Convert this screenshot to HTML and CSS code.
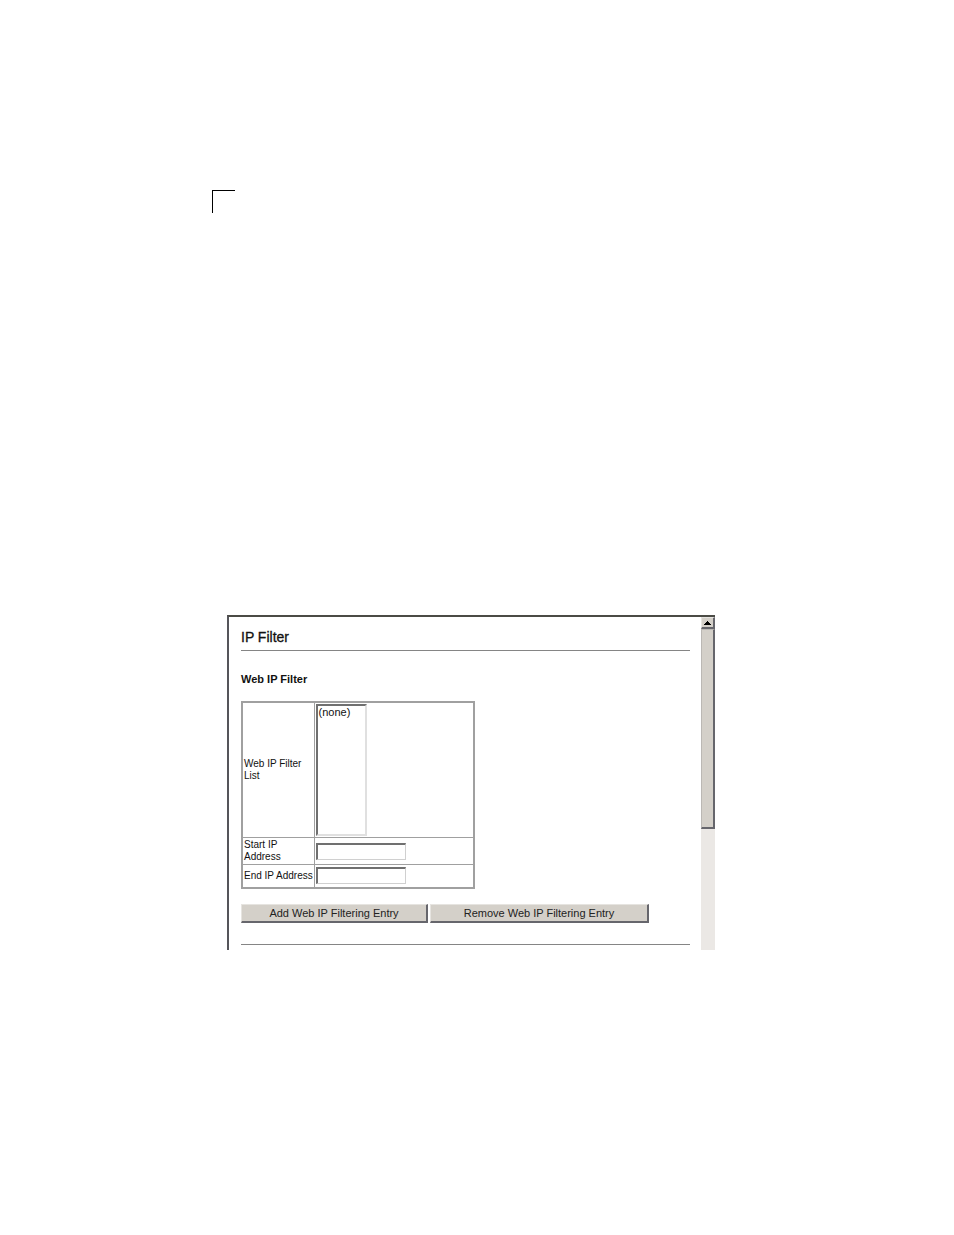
FILE: index.html
```html
<!DOCTYPE html>
<html lang="en">
<head>
  <meta charset="UTF-8">
  <meta name="viewport" content="width=device-width, initial-scale=1.0">
  <title>IP Filter</title>
  <link rel="stylesheet" href="styles.css">
</head>
<body>
  <div class="corner"></div>
  <div class="window">
    <form class="content" id="filterForm">
      <h1>IP Filter</h1>
      <hr>
      <h2>Web IP Filter</h2>
      <table class="filter-table">
        <tr>
          <td class="name"><label for="filterList">Web IP Filter List</label></td>
          <td>
            <select id="filterList" name="filterList" size="8">
              <option>(none)</option>
            </select>
          </td>
        </tr>
        <tr>
          <td class="name"><label for="startIp">Start IP Address</label></td>
          <td><input type="text" id="startIp" name="startIp"></td>
        </tr>
        <tr>
          <td class="name one-line"><label for="endIp">End IP Address</label></td>
          <td><input type="text" id="endIp" name="endIp"></td>
        </tr>
      </table>
      <div class="buttons">
        <button type="button" class="add">Add Web IP Filtering Entry</button>
        <button type="button" class="remove">Remove Web IP Filtering Entry</button>
      </div>
      <hr>
    </form>
    <div class="scrollbar">
      <button type="button" class="scroll-up" aria-label="Scroll up">
        <svg width="7" height="4" viewBox="0 0 7 4"><path d="M3 0h1v1h1v1h1v1h1v1H0V3h1V2h1V1h1z"/></svg>
      </button>
      <div class="thumb"></div>
    </div>
  </div>
</body>
</html>
```

FILE: styles.css
```css
* {
  box-sizing: border-box;
}
body {
  margin: 0;
  padding: 190px 239px 0 212px;
  background-color: white;
  color: #111;
  font-family: "Liberation Sans", Arial, sans-serif;
}
.corner {
  width: 23px;
  height: 23px;
  border-top: 1px solid black;
  border-left: 1px solid black;
}
.window {
  display: flex;
  margin: 402px 0 0 15px;
  border-top: 2px solid #4b4b45;
  border-left: 2px solid #55555a;
}
.content {
  flex: 1;
  padding: 12px 11px 5px 12px;
}
h1 {
  margin: 0 0 5px;
  font-size: 14px;
  line-height: 16px;
  font-weight: normal;
  -webkit-text-stroke: 0.3px #111;
}
hr {
  height: 1px;
  margin: 0;
  border: none;
  background-color: #858585;
}
h2 {
  margin: 20px 0 14px;
  font-size: 11px;
  line-height: 16px;
}
.filter-table {
  width: 234px;
  table-layout: fixed;
  border-collapse: collapse;
  border: 2px solid #a0a0a0;
}
td {
  height: 23px;
  padding: 1px;
  border: 1px solid #a0a0a0;
  font-size: 10px;
  line-height: 12px;
}
.name {
  width: 72px;
}
.one-line {
  white-space: nowrap;
}
td label {
  display: block;
}
select {
  display: block;
  width: 51px;
  height: 132px;
  padding: 0 1px;
  border: 2px solid #e0e0e0;
  border-top-color: #707070;
  border-left-color: #707070;
  border-radius: 0;
  background-color: white;
  color: #111;
  font-family: inherit;
  font-size: 11px;
  overflow: hidden;
}
option {
  min-height: 13px;
  padding: 0;
  line-height: 13px;
}
input {
  display: block;
  width: 90px;
  height: 17px;
  padding: 1px;
  border: 1px solid #d0d0d0;
  border-top: 2px solid #707070;
  border-left: 2px solid #707070;
  font-family: inherit;
  font-size: 11px;
}
.buttons {
  display: flex;
  gap: 2px;
  margin: 15px 0 20px;
}
.buttons button {
  height: 19px;
  margin-bottom: 1px;
  padding: 0;
  border: 1px solid #e6e4e0;
  border-right: 2px solid #66666c;
  border-bottom: 2px solid #66666c;
  background-color: #d4d0c9;
  color: #222;
  font-family: inherit;
  font-size: 11px;
  line-height: 16px;
}
.buttons .add {
  width: 187px;
}
.buttons .remove {
  width: 219px;
}
.scrollbar {
  width: 14px;
  background-color: #ebe8e5;
}
.scroll-up {
  display: flex;
  justify-content: center;
  align-items: center;
  width: 100%;
  height: 12px;
  padding: 0;
  border: 1px solid #e6e4e0;
  border-right: 2px solid #66666c;
  border-bottom: 2px solid #66666c;
  background-color: #d4d0c9;
}
.thumb {
  height: 60%;
  border: 1px solid #bbb8b4;
  border-right: 2px solid #66666c;
  border-bottom: 2px solid #66666c;
  background-color: #d4d0c9;
}
```
